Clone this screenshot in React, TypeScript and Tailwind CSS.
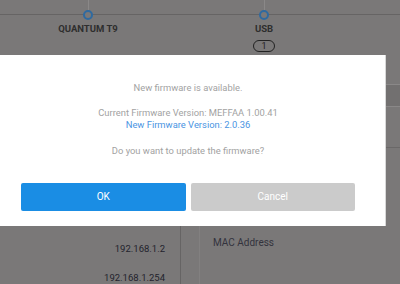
import React from "react";

function Step({ label, badge, className }: { label: string; badge?: string; className: string }) {
  return (
    <div className={`flex flex-col items-center ${className}`}>
      <div className="h-[10px] w-px bg-[#8a8888]" />
      <div className="h-[10px] w-[10px] rounded-full border-2 border-[#2f6aa0] bg-[#7a7878]" />
      <div className="mt-[4px] text-[9.5px] font-bold leading-[10px] text-[#2e2e2e]">{label}</div>
      {badge && (
        <div className="mt-[6px] flex h-[12px] w-[22px] items-center justify-center rounded-full border-[1.5px] border-[#222] text-[9px] leading-none text-[#222]">
          {badge}
        </div>
      )}
    </div>
  );
}

export default function App() {
  return (
    <div
      className="relative flex h-[284px] w-[400px] flex-col overflow-hidden bg-[#7a7878]"
      style={{ fontFamily: "Roboto, 'Liberation Sans', sans-serif" }}
    >
      {/* stepper */}
      <div className="relative h-[55px] shrink-0">
        <div className="absolute left-0 right-0 top-[14px] h-px bg-[#666464]" />
        <div className="relative flex">
          <Step label="QUANTUM T9" className="ml-[48px] w-[80px]" />
          <Step label="USB" badge="1" className="ml-[106px] w-[60px]" />
        </div>
      </div>

      {/* section behind the dialog */}
      <div className="flex h-[171px] shrink-0 flex-col pt-[29px]">
        <div className="h-[23px] border-y border-[#8a8888] bg-[#727070]" />
        <div className="mt-[40px] h-px bg-[#6a6868]" />
      </div>

      {/* table */}
      <div className="flex h-[58px] shrink-0">
        <div className="flex w-[180px] flex-col items-end pr-[15px] text-[9.5px] text-[#23232d]">
          <div className="mt-[17px] leading-[11px]">192.168.1.2</div>
          <div className="mt-[18px] leading-[11px]">192.168.1.254</div>
        </div>
        <div className="w-px bg-[#666464]" />
        <div className="w-[18px]" />
        <div className="w-px bg-[#828080]" />
        <div className="pl-[13px] pt-[11px] text-[10px] leading-[12px] text-[#33333d]">MAC Address</div>
      </div>

      {/* dialog */}
      <div className="absolute left-[-9px] top-[55px] flex h-[171px] w-[395px] flex-col items-center border-r border-[#d8d8d8] bg-white px-[30px] pt-[27px] text-center text-[9.4px] leading-[12px] text-[#a2a2a2]">
        <div>New firmware is available.</div>
        <div className="mt-[13px]">Current Firmware Version: MEFFAA 1.00.41</div>
        <div className="text-[#4a94e2]">New Firmware Version: 2.0.36</div>
        <div className="mt-[14px]">Do you want to update the firmware?</div>
        <div className="mt-[26px] flex w-full gap-[5px]">
          <button className="flex h-[28px] flex-1 items-center justify-center rounded-[2px] bg-[#1a8de4] text-[10px] text-white">
            OK
          </button>
          <button className="flex h-[28px] flex-1 items-center justify-center rounded-[2px] bg-[#cbcbcb] text-[10px] text-white">
            Cancel
          </button>
        </div>
      </div>
    </div>
  );
}
